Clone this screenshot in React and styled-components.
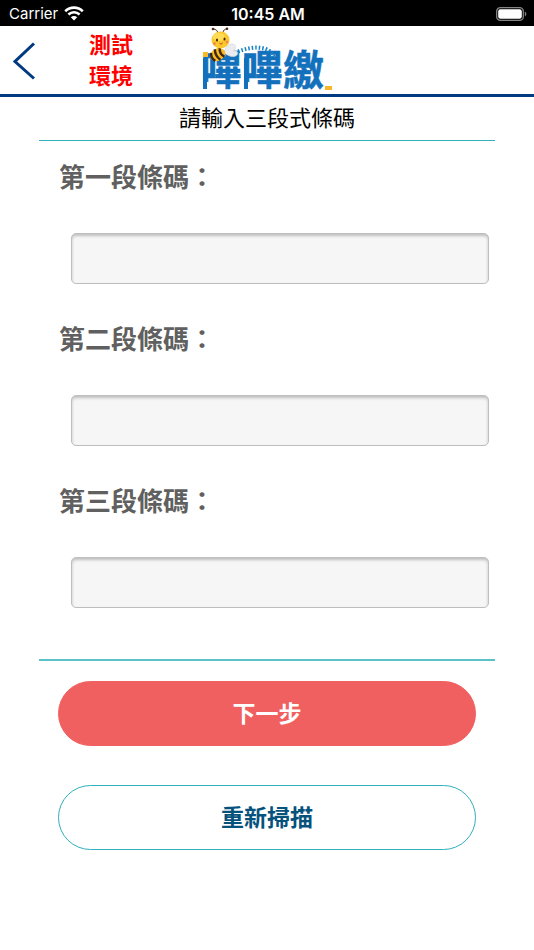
import { useState } from 'react';
import styled, { createGlobalStyle } from 'styled-components';

const GlobalStyle = createGlobalStyle`
  * {
    box-sizing: border-box;
  }

  body {
    margin: 0;
    background-color: #fff;
    font-family: 'Liberation Sans', 'Noto Sans CJK TC', sans-serif;
  }
`;

const Container = styled.div`
  width: 100%;
  min-height: 100vh;
  background-color: #fff;
`;

const StatusBar = styled.div`
  height: 26px;
  padding: 1px 7px 0 9px;
  display: grid;
  grid-template-columns: 1fr auto 1fr;
  align-items: center;
  background-color: #000;
  color: #fff;
  font-family: Inter, sans-serif;
  font-size: 15px;
  line-height: 24px;
`;

const Carrier = styled.div`
  display: flex;
  align-items: center;
  gap: 6px;
`;

const Clock = styled.div`
  font-size: 16px;
  font-weight: 600;
`;

const Battery = styled.svg`
  justify-self: end;
`;

const Header = styled.header`
  height: 71px;
  padding: 0 13px;
  display: grid;
  grid-template-columns: 1fr auto 1fr;
  align-items: center;
  border-bottom: 3px solid #003a80;
`;

const HeaderLeft = styled.div`
  padding-top: 2px;
  display: flex;
  align-items: center;
  gap: 53px;
`;

const BackButton = styled.button`
  display: flex;
  padding: 0;
  border: none;
  background: none;
  cursor: pointer;
`;

const Environment = styled.div`
  width: 44px;
  color: #f00;
  font-size: 22px;
  font-weight: 700;
  line-height: 31px;
`;

const Logo = styled.svg`
  display: block;
  overflow: visible;
`;

const Title = styled.h1`
  margin: 0;
  text-align: center;
  color: #000;
  font-size: 22px;
  font-weight: 400;
  line-height: 43px;
`;

const Form = styled.form`
  margin: 0 39px;
`;

const Fields = styled.div`
  padding: 18px 6px 51px 20px;
  display: flex;
  flex-direction: column;
  gap: 37px;
  border-top: 1px solid #2fb0ba;
  border-bottom: 2px solid #5cc2ca;
`;

const Field = styled.div`
  display: flex;
  flex-direction: column;
  gap: 36px;
`;

const Label = styled.label`
  color: #606060;
  font-size: 26px;
  font-weight: 700;
  line-height: 38px;
`;

const Input = styled.input`
  height: 51px;
  margin-left: 12px;
  padding: 0 12px;
  border: 1px solid #bebebe;
  border-radius: 5px;
  background-color: #f6f6f6;
  box-shadow: inset 0 2px 3px #bebebe;
  color: #333;
  font-size: 22px;
  outline: none;
`;

const Actions = styled.div`
  padding: 20px 19px;
  display: flex;
  flex-direction: column;
  gap: 39px;
`;

const Button = styled.button`
  height: 65px;
  padding: 0 0 4px;
  border: 1px solid ${(props) => (props.$primary ? '#f06060' : '#2fb0ba')};
  border-radius: 33px;
  background-color: ${(props) => (props.$primary ? '#f06060' : '#fff')};
  color: ${(props) => (props.$primary ? '#fff' : '#05527c')};
  font-family: inherit;
  font-size: 23px;
  font-weight: 700;
  cursor: pointer;
`;

const fields = [
  { id: 'first', label: '第一段條碼：' },
  { id: 'second', label: '第二段條碼：' },
  { id: 'third', label: '第三段條碼：' },
];

const WifiIcon = () => (
  <svg width="20" height="15" viewBox="0 0 20 15" aria-hidden="true">
    <g fill="none" stroke="#fff" strokeWidth="2.6">
      <path d="M1.2 5.2C6.2.4 13.8.4 18.8 5.2" />
      <path d="M4.4 8.5c3.2-3 8-3 11.2 0" />
    </g>
    <path d="M10 14.6l-3.2-3.3c1.8-1.7 4.6-1.7 6.4 0z" fill="#fff" />
  </svg>
);

const BatteryIcon = () => (
  <Battery width="31" height="14" viewBox="0 0 31 14" aria-hidden="true">
    <rect x="0.7" y="0.7" width="26.6" height="12.6" rx="3.6" fill="none" stroke="#858585" strokeWidth="1.3" />
    <rect x="2.2" y="2.2" width="23.6" height="9.6" rx="2.2" fill="#fff" />
    <path d="M28.8 4.6c2 .7 2 4.1 0 4.8z" fill="#858585" />
  </Battery>
);

const Bee = () => (
  <g>
    <path
      d="M23 27c1-6 5-10 9-9 4 1 3 5 0 7 4-1 6 2 4 4-3 3-9 1-13-2z"
      fill="#e9ebee"
      stroke="#cfd2d7"
      strokeWidth="0.5"
    />
    <g transform="rotate(-28 18 29)">
      <ellipse cx="17" cy="28" rx="8" ry="6" fill="#f9bb24" />
      <path d="M12 23.5c-2 3-2 6 0 9M17 22c-2 4-2 8 0 12M22 23c-2 3-2 7 0 10" fill="none" stroke="#40250f" strokeWidth="2.4" />
    </g>
    <g fill="none" stroke="#4c2b16" strokeWidth="1">
      <path d="M17 8C17 5 15 3 12 3M22 7c0-3 2-4 4-4" />
    </g>
    <circle cx="12" cy="3" r="1.3" fill="#4c2b16" />
    <circle cx="26" cy="2.8" r="1.3" fill="#4c2b16" />
    <ellipse cx="19.5" cy="14" rx="9" ry="8.5" fill="#fbc82d" />
    <ellipse cx="18" cy="11" rx="6" ry="4" fill="#ffdc55" />
    <ellipse cx="16" cy="14" rx="1" ry="1.5" fill="#41230e" />
    <ellipse cx="23.5" cy="13" rx="1" ry="1.5" fill="#41230e" />
    <circle cx="13.5" cy="17.5" r="1.5" fill="#f58b49" />
    <circle cx="26" cy="16" r="1.5" fill="#f58b49" />
    <path d="M18.5 17c1 1.5 2.5 1.2 3-.3" fill="none" stroke="#b33e24" strokeWidth="1" />
  </g>
);

const BrandLogo = () => (
  <Logo width="132" height="68" viewBox="0 0 132 68" role="img" aria-label="嗶嗶繳">
    <text
      x="0"
      y="59"
      fill="#1370bc"
      stroke="#1370bc"
      strokeWidth="0.5"
      fontFamily="'Noto Sans CJK TC', sans-serif"
      fontSize="41"
      fontWeight="700">
      嗶嗶繳
    </text>
    <path d="M4 32v31M45 32v31" stroke="#1370bc" strokeWidth="4" />
    <path d="M2 26h5v5H2z" fill="#f9b82c" />
    <path d="M124 60h7v4h-7z" fill="#f9b82c" />
    <path
      d="M34 27c10-5 22-7 31-4 5 2 7 5 8 10"
      fill="none"
      stroke="#1683c5"
      strokeWidth="4"
      strokeDasharray="1.5 2"
    />
    <Bee />
  </Logo>
);

const App = () => {
  const [codes, setCodes] = useState({ first: '', second: '', third: '' });

  const handleChange = (e) => {
    setCodes({ ...codes, [e.target.name]: e.target.value });
  };

  return (
    <Container>
      <GlobalStyle />
      <StatusBar>
        <Carrier>
          Carrier
          <WifiIcon />
        </Carrier>
        <Clock>10:45 AM</Clock>
        <BatteryIcon />
      </StatusBar>
      <Header>
        <HeaderLeft>
          <BackButton type="button" aria-label="返回">
            <svg width="23" height="38" viewBox="0 0 23 38">
              <path d="M21 1.5L2 19.5l19 17" fill="none" stroke="#003a80" strokeWidth="3" />
            </svg>
          </BackButton>
          <Environment>測試環境</Environment>
        </HeaderLeft>
        <BrandLogo />
      </Header>
      <Title>請輸入三段式條碼</Title>
      <Form onSubmit={(e) => e.preventDefault()}>
        <Fields>
          {fields.map((field) => (
            <Field key={field.id}>
              <Label htmlFor={field.id}>{field.label}</Label>
              <Input id={field.id} name={field.id} value={codes[field.id]} onChange={handleChange} />
            </Field>
          ))}
        </Fields>
        <Actions>
          <Button type="submit" $primary>
            下一步
          </Button>
          <Button type="button">重新掃描</Button>
        </Actions>
      </Form>
    </Container>
  );
};

export default App;
